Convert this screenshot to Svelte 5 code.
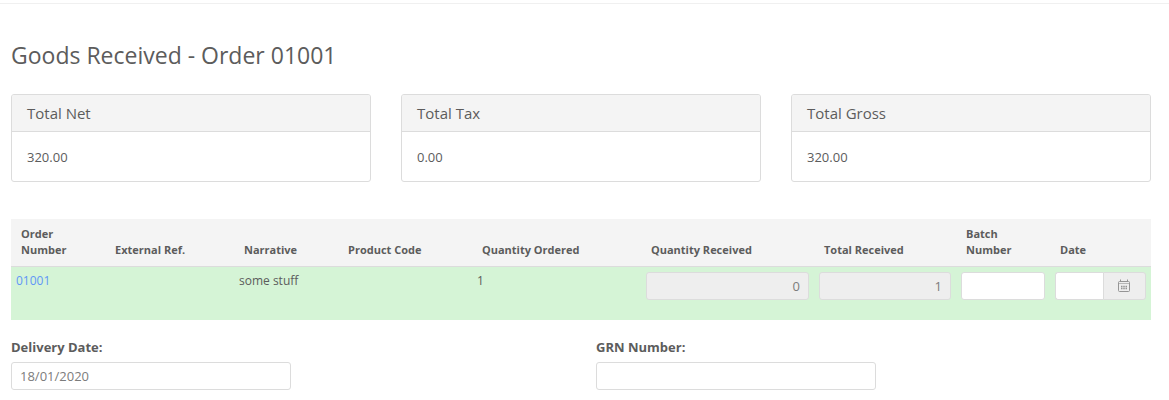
<script lang="ts">
  // GoodsReceived.svelte: order totals, received lines and delivery details

  interface Total {
    title: string;
    value: string;
  }

  interface Column {
    title: string;
    width: number;
  }

  interface Line {
    order: string;
    externalRef: string;
    narrative: string;
    productCode: string;
    ordered: number;
    received: number;
    totalReceived: number;
    batch: string;
    date: string;
  }

  const orderNumber = '01001';

  const totals: Total[] = [
    { title: 'Total Net', value: '320.00' },
    { title: 'Total Tax', value: '0.00' },
    { title: 'Total Gross', value: '320.00' }
  ];

  const columns: Column[] = [
    { title: 'Order Number', width: 94 },
    { title: 'External Ref.', width: 129 },
    { title: 'Narrative', width: 104 },
    { title: 'Product Code', width: 134 },
    { title: 'Quantity Ordered', width: 169 },
    { title: 'Quantity Received', width: 173 },
    { title: 'Total Received', width: 142 },
    { title: 'Batch Number', width: 94 },
    { title: 'Date', width: 101 }
  ];

  const totalWidth = columns.reduce((sum, c) => sum + c.width, 0);

  let lines = $state<Line[]>([
    {
      order: '01001',
      externalRef: '',
      narrative: 'some stuff',
      productCode: '',
      ordered: 1,
      received: 0,
      totalReceived: 1,
      batch: '',
      date: ''
    }
  ]);

  let deliveryDate = $state('18/01/2020');
  let grnNumber = $state('');
</script>

<main class="page">
  <h1 class="page__title">Goods Received - Order {orderNumber}</h1>

  <div class="totals">
    {#each totals as total}
      <section class="panel">
        <h2 class="panel__heading">{total.title}</h2>
        <div class="panel__body">{total.value}</div>
      </section>
    {/each}
  </div>

  <table class="lines">
    <colgroup>
      {#each columns as column}
        <col style="width: {(column.width / totalWidth) * 100}%" />
      {/each}
    </colgroup>
    <thead>
      <tr>
        {#each columns as column}
          <th scope="col">{column.title}</th>
        {/each}
      </tr>
    </thead>
    <tbody>
      {#each lines as line}
        <tr>
          <td><a href="#order-{line.order}">{line.order}</a></td>
          <td>{line.externalRef}</td>
          <td>{line.narrative}</td>
          <td>{line.productCode}</td>
          <td>{line.ordered}</td>
          <td>
            <input class="control control--number" type="text" aria-label="Quantity Received" value={line.received} readonly />
          </td>
          <td>
            <input class="control control--number" type="text" aria-label="Total Received" value={line.totalReceived} readonly />
          </td>
          <td>
            <input class="control" type="text" aria-label="Batch Number" bind:value={line.batch} />
          </td>
          <td>
            <div class="date-group">
              <input class="control" type="text" aria-label="Date" bind:value={line.date} />
              <button type="button" class="date-group__button" aria-label="Choose date">
                <svg aria-hidden="true" width="13" height="14" viewBox="0 0 13 14" fill="none" stroke="currentColor">
                  <rect x="0.5" y="2.5" width="11" height="10" rx="1" />
                  <path d="M1 4.5h10" opacity="0.6" />
                  <path d="M2.5 0.5v2M9.5 0.5v2" />
                  <path d="M3 7.5h1.5M5.25 7.5h1.5M7.5 7.5h1.5M3 9.5h1.5M5.25 9.5h1.5M7.5 9.5h1.5" stroke-width="1.5" />
                </svg>
              </button>
            </div>
          </td>
        </tr>
      {/each}
    </tbody>
  </table>

  <form class="details">
    <div class="field">
      <label for="delivery-date">Delivery Date:</label>
      <input id="delivery-date" class="control" type="text" bind:value={deliveryDate} />
    </div>
    <div class="field">
      <label for="grn-number">GRN Number:</label>
      <input id="grn-number" class="control" type="text" bind:value={grnNumber} />
    </div>
  </form>
</main>

<style>
  :global(body) {
    background-color: #fff;
  }

  .page {
    margin-top: 3px;
    padding: 36px 18px 10px 11px;
    border-top: 1px solid #f0f0f0;
    color: #5c5c5c;
    font-family: 'Open Sans', sans-serif;
    font-size: 13px;
    line-height: 20px;
  }

  .page__title {
    margin: 0 0 24px;
    font-size: 23px;
    font-weight: 400;
    line-height: 30px;
  }

  /* ============ Totals ============ */
  .totals {
    display: grid;
    grid-template-columns: repeat(3, 1fr);
    gap: 30px;
    margin-bottom: 37px;
  }

  .panel {
    border: 1px solid #dcdcdc;
    border-radius: 3px;
    overflow: hidden;
  }

  .panel__heading {
    margin: 0;
    padding: 8px 15px;
    border-bottom: 1px solid #dcdcdc;
    background-color: #f4f4f4;
    font-size: 15px;
    font-weight: 400;
    line-height: 20px;
  }

  .panel__body {
    padding: 15px 15px 14px;
  }

  /* ============ Lines ============ */
  .lines {
    width: 100%;
    margin-bottom: 17px;
    border-collapse: separate;
    border-spacing: 0;
    table-layout: fixed;
    font-size: 12px;
  }

  .lines th {
    padding: 7px 10px 8px;
    border-bottom: 1px solid #dcdcdc;
    background-color: #f4f4f4;
    font-size: 11px;
    font-weight: 700;
    line-height: 16px;
    text-align: left;
    vertical-align: bottom;
  }

  .lines td {
    height: 43px;
    padding: 5px;
    background-color: #d5f4d6;
    line-height: 18px;
    vertical-align: top;
  }

  .lines a {
    color: #6196f7;
    text-decoration: none;
  }

  /* ============ Controls ============ */
  .control {
    display: block;
    box-sizing: border-box;
    width: 100%;
    min-width: 0;
    height: 28px;
    padding: 4px 8px;
    border: 1px solid #dcdcdc;
    border-radius: 3px;
    background-color: #fff;
    color: #7c7c7c;
    font-family: inherit;
    font-size: 13px;
    line-height: 18px;
  }

  .control--number {
    background-color: #eee;
    text-align: right;
  }

  .date-group {
    display: flex;
  }

  .date-group .control {
    flex: 1;
    border-right: 0;
    border-radius: 3px 0 0 3px;
  }

  .date-group__button {
    display: flex;
    align-items: center;
    justify-content: center;
    box-sizing: border-box;
    width: 43px;
    height: 28px;
    padding: 0;
    border: 1px solid #dcdcdc;
    border-radius: 0 3px 3px 0;
    background-color: #eee;
    color: #959595;
    cursor: pointer;
  }

  /* ============ Details ============ */
  .details {
    display: grid;
    grid-template-columns: repeat(2, 1fr);
    gap: 30px;
  }

  .field label {
    display: block;
    margin-bottom: 5px;
    font-weight: 700;
  }

  .field .control {
    max-width: 280px;
  }
</style>
